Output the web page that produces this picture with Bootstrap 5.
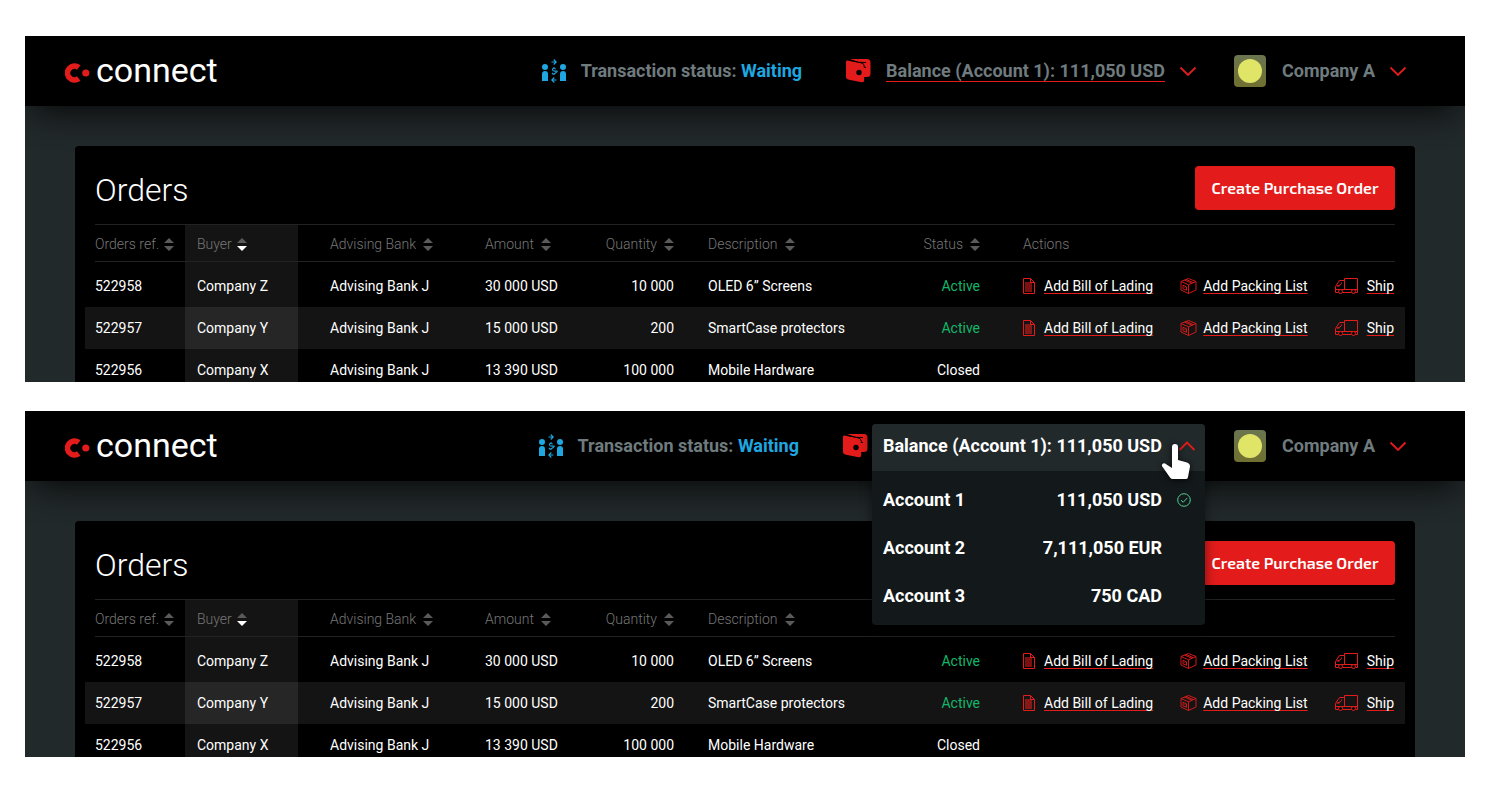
<!DOCTYPE html>
<html lang="en">
<head>
<meta charset="utf-8">
<meta name="viewport" content="width=device-width, initial-scale=1">
<title>Connect – Orders</title>
<link href="https://cdn.jsdelivr.net/npm/bootstrap@5.3.0/dist/css/bootstrap.min.css" rel="stylesheet">
<style>
  body { font-family: Roboto, "Liberation Sans", sans-serif; font-size: 14px; line-height: 20px; background: #fff; color: #fff; }
  .boards { padding: 36px 47px 31px 25px; gap: 29px; }
  .board { background: #22292b; overflow: hidden; }
  .topbar { background: #000; height: 70px; padding: 0 58px 0 40px; box-shadow: 0 14px 32px -8px rgba(0,0,0,.8); font-size: 18px; line-height: 24px; font-weight: 700; color: #6f7b7e; position: relative; z-index: 2; }
  .brand { font-size: 34px; line-height: 40px; font-weight: 400; color: #fff; gap: 6px; padding-bottom: 2px; }
  .brand:hover { color: #fff; }
  .brand svg { margin-top: 6px; }
  .status-icon { margin-right: 14px; }
  .waiting { color: #1ea7e1; }
  .wallet { margin-left: 44px; }
  .plain-btn { background: none; border: 0; padding: 0; color: inherit; font: inherit; display: flex; align-items: center; }
  .balance { margin-left: 15px; gap: 14px; }
  .balance-text { border-bottom: 1px solid #e31c1b; line-height: 20px; }
  .company { margin-left: 37px; gap: 14px; }
  .avatar { width: 32px; height: 32px; border-radius: 4px; background: linear-gradient(#6a7550, #707030); margin-right: 2px; }
  .avatar::before { content: ""; width: 24px; height: 24px; border-radius: 50%; background: #e1e567; }

  .picker { margin-left: 4px; width: 333px; height: 46px; }
  .picker-box { position: absolute; top: 1px; left: 0; right: 0; background: #13181a; border-radius: 4px; box-shadow: 0 4px 12px rgba(0,0,0,.5); color: #fff; }
  .picker-head { width: 100%; height: 47px; padding: 0 9px 3px 11px; justify-content: space-between; background: #22292b; border-radius: 4px 4px 0 0; }
  .picker + .company { margin-left: 29px; }
  .accounts { padding: 5px 0; margin: 0; list-style: none; }
  .account { width: 100%; height: 48px; padding: 0 14px 0 11px; gap: 15px; }
  .account .tick { width: 14px; }
  .pointer { position: absolute; left: 290px; top: 20px; pointer-events: none; filter: drop-shadow(0 1px 3px rgba(0,0,0,.8)); }

  .page { padding: 40px 50px 0; }
  .orders { background: #000; border-radius: 4px 4px 0 0; padding: 20px 20px 0; }
  .orders-title { font-size: 32px; line-height: 48px; font-weight: 300; margin: 0; }
  .create { background: #e31c1b; color: #fff; border: 0; border-radius: 4px; width: 200px; height: 44px; padding: 0 0 1px; font-family: "Exo 2", Roboto, sans-serif; font-size: 16px; font-weight: 600; }
  .create:hover { background: #c81615; color: #fff; }
  .grid { width: 100%; table-layout: fixed; border-collapse: separate; border-spacing: 0; margin-top: 10px; white-space: nowrap; }
  .grid th { font-weight: 300; color: #777; border: solid #222; border-width: 1px 0; height: 38px; padding: 2px 0 0; }
  .grid td { padding: 11px 0; }
  .grid tr.first td { padding-top: 14px; }
  .grid tr.last td { padding-bottom: 2px; }
  .grid .buyer { padding-left: 12px; background: #141414; }
  .grid .bank { padding-left: 32px; }
  .grid .desc { padding-left: 34px; }
  .grid th.acts { padding-left: 43px; }
  .grid td.acts { padding-left: 42px; padding-right: 1px; }
  .grid tr.lit td { background: #141414; }
  .grid tr.lit td.buyer { background: #262626; }
  .grid tr.lit td:first-child { box-shadow: -10px 0 #141414; }
  .grid tr.lit td:last-child { box-shadow: 10px 0 #141414; }
  .c-ref { width: 90px; } .c-buyer { width: 113px; } .c-bank { width: 187px; } .c-amount { width: 95px; }
  .c-qty { width: 94px; } .c-desc { width: 206px; } .c-status { width: 100px; } .c-acts { width: 415px; }
  .sorter { gap: 7px; display: inline-flex; color: #5a5a5a; }
  .sorter.tight { gap: 5px; }
  .sorter span { color: #777; }
  .active-text { color: #12b76a; }
  .act { color: #fff; text-decoration: none; gap: 8px; }
  .act:hover { color: #fff; }
  .act.pack { gap: 6px; }
  .act span { text-decoration: underline #e31c1b 1px; text-underline-offset: 2px; text-decoration-skip-ink: none; }
</style>
</head>
<body>
<svg width="0" height="0" class="position-absolute" aria-hidden="true">
  <symbol id="i-logo" viewBox="0 0 25 20"><path d="M15.500 2.200A9.800 9.800 0 1 0 15.500 17.800L12 13.200A4.100 4.100 0 1 1 12 6.800Z" fill="#e31c1b"/><circle cx="20.800" cy="10" r="3.600" fill="#e31c1b"/></symbol>
  <symbol id="i-people" viewBox="0 0 26 26"><g fill="#1ea7e1"><circle cx="4" cy="9" r="3"/><path d="M1 23v-7q0-3 3-3t3 3v7z"/><circle cx="22" cy="9" r="3"/><path d="M19 23v-7q0-3 3-3t3 3v7z"/></g><g fill="none" stroke="#1ea7e1" stroke-width="1.100"><path d="M10.500 4h4.500M12.700 1.500L15.200 4l-2.500 2.500M15.500 22H11M13.300 19.500L10.800 22l2.500 2.500M14.700 11q-3.200-1.200-3.200.600t3.200 1.500-.200 1.900-3.200-.3M13 9v1M13 15.500v1.500"/></g></symbol>
  <symbol id="i-wallet" viewBox="0 0 25 24"><path d="M4 0h17q3.500 0 3.500 3.500v11q0 3.500-3.500 3.500h-3V7q0-2.500-3-3.200z" fill="#e31c1b"/><path d="M0 3Q0 1.300 2 1.600L15.500 4.200q2.700.6 2.700 3.300v13.500q0 2.700-2.500 2.200L3 20.700q-3-.6-3-3z" fill="#e31c1b"/><path d="M2.500 1.200L15 3.700q3 .6 3.300 3.300v2M14 3.300l6 .2M18.500 8.500h1.500" stroke="#000" stroke-width=".9" fill="none"/><circle cx="13" cy="13.500" r="2.700"/></symbol>
  <symbol id="i-down" viewBox="0 0 18 12"><path d="M1.500 2.500L9 10 16.500 2.500" fill="none" stroke="#e31c1b" stroke-width="1.800"/></symbol>
  <symbol id="i-up" viewBox="0 0 18 12"><path d="M1.500 10L9 2.500 16.500 10" fill="none" stroke="#e31c1b" stroke-width="1.800"/></symbol>
  <symbol id="i-sort" viewBox="0 0 10 13"><path d="M0 5L5 0l5 5zM0 8l5 5 5-5z" fill="currentColor"/></symbol>
  <symbol id="i-sort-desc" viewBox="0 0 10 13"><path d="M0 5L5 0l5 5z" fill="currentColor"/><path d="M0 8l5 5 5-5z" fill="#fff"/></symbol>
  <symbol id="i-doc" viewBox="0 0 14 16"><path d="M3 4h7v10H3z" fill="#e31c1b" opacity=".55"/><path d="M1.500.500h7l4 4v11h-11zM8.500.500v4h4" fill="none" stroke="#e31c1b"/></symbol>
  <symbol id="i-box" viewBox="0 0 17 16"><path d="M8.500.500l7.500 3v8.500l-7.500 3.500L1 12V3.500zM1 3.500l7.500 3.300L16 3.500M8.500 6.800v8.700M4.500 2l7.500 3.300M6 1.400l7.500 3.300M3 7.300l3.500 1.500v3.500L3 10.800zM4.500 9.500l1 .5" fill="none" stroke="#e31c1b" stroke-width=".9"/></symbol>
  <symbol id="i-truck" viewBox="0 0 24 16"><g fill="none" stroke="#e31c1b"><path d="M3.500 14.500h-3v-6L4.500 2.500h5V.500h13v14h-2M9.500 2.500v9M7.500 14.500h9M.500 11.500h22M2.500 8l2.500-1 1.500-1.500V4.500M4.500 8h-3"/></g><g fill="#000" stroke="#e31c1b"><circle cx="5.500" cy="13.500" r="2"/><circle cx="18.500" cy="13.500" r="2"/></g></symbol>
  <symbol id="i-tick" viewBox="0 0 14 14"><g fill="none" stroke="#4fcf93"><circle cx="7" cy="7" r="6.300"/><path d="M4 7.200l2.200 2.100L10.200 5"/></g></symbol>
  <symbol id="i-hand" viewBox="0 0 28 36"><path d="M10 3q0-3 3-3t3 3v13l9 2.500q3 1 3 4l-2 10.500q0 2-2 2H11q-2 0-3-1.500L1 23.500q-2-2-.5-3.500 1.500-1.500 4 .5L10 24z" fill="#fff"/></symbol>
</svg>

<main class="boards d-flex flex-column">
  <section class="board" aria-label="Balance menu closed">
    <header class="topbar d-flex align-items-center">
      <a href="#" class="brand d-flex align-items-center text-decoration-none me-auto"><svg width="25" height="20"><use href="#i-logo"/></svg>connect</a>
      <svg class="status-icon" width="26" height="26"><use href="#i-people"/></svg>
      <span>Transaction status: <span class="waiting">Waiting</span></span>
      <svg class="wallet" width="25" height="24"><use href="#i-wallet"/></svg>
      <button type="button" class="plain-btn balance" aria-expanded="false"><span class="balance-text">Balance (Account 1): 111,050 USD</span><svg width="18" height="12"><use href="#i-down"/></svg></button>
      <button type="button" class="plain-btn company"><span class="avatar d-flex align-items-center justify-content-center"></span>Company A<svg width="18" height="12"><use href="#i-down"/></svg></button>
    </header>
    <div class="page"><div class="orders">
      <div class="d-flex justify-content-between align-items-start"><h1 class="orders-title">Orders</h1><button type="button" class="btn create">Create Purchase Order</button></div>
      <table class="grid">
        <colgroup><col class="c-ref"><col class="c-buyer"><col class="c-bank"><col class="c-amount"><col class="c-qty"><col class="c-desc"><col class="c-status"><col class="c-acts"></colgroup>
        <thead><tr>
          <th><button type="button" class="plain-btn sorter tight"><span>Orders ref.</span><svg width="10" height="13"><use href="#i-sort"/></svg></button></th>
          <th class="buyer"><button type="button" class="plain-btn sorter tight"><span>Buyer</span><svg width="10" height="13"><use href="#i-sort-desc"/></svg></button></th>
          <th class="bank"><button type="button" class="plain-btn sorter"><span>Advising Bank</span><svg width="10" height="13"><use href="#i-sort"/></svg></button></th>
          <th><button type="button" class="plain-btn sorter"><span>Amount</span><svg width="10" height="13"><use href="#i-sort"/></svg></button></th>
          <th class="text-end"><button type="button" class="plain-btn sorter"><span>Quantity</span><svg width="10" height="13"><use href="#i-sort"/></svg></button></th>
          <th class="desc"><button type="button" class="plain-btn sorter"><span>Description</span><svg width="10" height="13"><use href="#i-sort"/></svg></button></th>
          <th class="text-end"><button type="button" class="plain-btn sorter"><span>Status</span><svg width="10" height="13"><use href="#i-sort"/></svg></button></th>
          <th class="acts">Actions</th>
        </tr></thead>
        <tbody>
          <tr class="first"><td>522958</td><td class="buyer">Company Z</td><td class="bank">Advising Bank J</td><td>30 000 USD</td><td class="text-end">10 000</td><td class="desc">OLED 6” Screens</td><td class="text-end active-text">Active</td>
            <td class="acts"><div class="d-flex justify-content-between"><a href="#" class="act d-flex align-items-center"><svg width="14" height="16"><use href="#i-doc"/></svg><span>Add Bill of Lading</span></a><a href="#" class="act pack d-flex align-items-center"><svg width="17" height="16"><use href="#i-box"/></svg><span>Add Packing List</span></a><a href="#" class="act d-flex align-items-center"><svg width="24" height="16"><use href="#i-truck"/></svg><span>Ship</span></a></div></td></tr>
          <tr class="lit"><td>522957</td><td class="buyer">Company Y</td><td class="bank">Advising Bank J</td><td>15 000 USD</td><td class="text-end">200</td><td class="desc">SmartCase protectors</td><td class="text-end active-text">Active</td>
            <td class="acts"><div class="d-flex justify-content-between"><a href="#" class="act d-flex align-items-center"><svg width="14" height="16"><use href="#i-doc"/></svg><span>Add Bill of Lading</span></a><a href="#" class="act pack d-flex align-items-center"><svg width="17" height="16"><use href="#i-box"/></svg><span>Add Packing List</span></a><a href="#" class="act d-flex align-items-center"><svg width="24" height="16"><use href="#i-truck"/></svg><span>Ship</span></a></div></td></tr>
          <tr class="last"><td>522956</td><td class="buyer">Company X</td><td class="bank">Advising Bank J</td><td>13 390 USD</td><td class="text-end">100 000</td><td class="desc">Mobile Hardware</td><td class="text-end">Closed</td><td class="acts"></td></tr>
        </tbody>
      </table>
    </div></div>
  </section>

  <section class="board" aria-label="Balance menu open">
    <header class="topbar d-flex align-items-center">
      <a href="#" class="brand d-flex align-items-center text-decoration-none me-auto"><svg width="25" height="20"><use href="#i-logo"/></svg>connect</a>
      <svg class="status-icon" width="26" height="26"><use href="#i-people"/></svg>
      <span>Transaction status: <span class="waiting">Waiting</span></span>
      <svg class="wallet" width="25" height="24"><use href="#i-wallet"/></svg>
      <div class="picker position-relative">
        <div class="picker-box">
          <button type="button" class="plain-btn picker-head" aria-expanded="true"><span>Balance (Account 1): 111,050 USD</span><svg width="18" height="12"><use href="#i-up"/></svg></button>
          <ul class="accounts">
            <li><button type="button" class="plain-btn account"><span class="me-auto">Account 1</span><span>111,050 USD</span><svg class="tick" width="14" height="14"><use href="#i-tick"/></svg></button></li>
            <li><button type="button" class="plain-btn account"><span class="me-auto">Account 2</span><span>7,111,050 EUR</span><span class="tick"></span></button></li>
            <li><button type="button" class="plain-btn account"><span class="me-auto">Account 3</span><span>750 CAD</span><span class="tick"></span></button></li>
          </ul>
          <svg class="pointer" width="28" height="36"><use href="#i-hand"/></svg>
        </div>
      </div>
      <button type="button" class="plain-btn company"><span class="avatar d-flex align-items-center justify-content-center"></span>Company A<svg width="18" height="12"><use href="#i-down"/></svg></button>
    </header>
    <div class="page"><div class="orders">
      <div class="d-flex justify-content-between align-items-start"><h2 class="orders-title">Orders</h2><button type="button" class="btn create">Create Purchase Order</button></div>
      <table class="grid">
        <colgroup><col class="c-ref"><col class="c-buyer"><col class="c-bank"><col class="c-amount"><col class="c-qty"><col class="c-desc"><col class="c-status"><col class="c-acts"></colgroup>
        <thead><tr>
          <th><button type="button" class="plain-btn sorter tight"><span>Orders ref.</span><svg width="10" height="13"><use href="#i-sort"/></svg></button></th>
          <th class="buyer"><button type="button" class="plain-btn sorter tight"><span>Buyer</span><svg width="10" height="13"><use href="#i-sort-desc"/></svg></button></th>
          <th class="bank"><button type="button" class="plain-btn sorter"><span>Advising Bank</span><svg width="10" height="13"><use href="#i-sort"/></svg></button></th>
          <th><button type="button" class="plain-btn sorter"><span>Amount</span><svg width="10" height="13"><use href="#i-sort"/></svg></button></th>
          <th class="text-end"><button type="button" class="plain-btn sorter"><span>Quantity</span><svg width="10" height="13"><use href="#i-sort"/></svg></button></th>
          <th class="desc"><button type="button" class="plain-btn sorter"><span>Description</span><svg width="10" height="13"><use href="#i-sort"/></svg></button></th>
          <th aria-label="Status"></th>
          <th aria-label="Actions"></th>
        </tr></thead>
        <tbody>
          <tr class="first"><td>522958</td><td class="buyer">Company Z</td><td class="bank">Advising Bank J</td><td>30 000 USD</td><td class="text-end">10 000</td><td class="desc">OLED 6” Screens</td><td class="text-end active-text">Active</td>
            <td class="acts"><div class="d-flex justify-content-between"><a href="#" class="act d-flex align-items-center"><svg width="14" height="16"><use href="#i-doc"/></svg><span>Add Bill of Lading</span></a><a href="#" class="act pack d-flex align-items-center"><svg width="17" height="16"><use href="#i-box"/></svg><span>Add Packing List</span></a><a href="#" class="act d-flex align-items-center"><svg width="24" height="16"><use href="#i-truck"/></svg><span>Ship</span></a></div></td></tr>
          <tr class="lit"><td>522957</td><td class="buyer">Company Y</td><td class="bank">Advising Bank J</td><td>15 000 USD</td><td class="text-end">200</td><td class="desc">SmartCase protectors</td><td class="text-end active-text">Active</td>
            <td class="acts"><div class="d-flex justify-content-between"><a href="#" class="act d-flex align-items-center"><svg width="14" height="16"><use href="#i-doc"/></svg><span>Add Bill of Lading</span></a><a href="#" class="act pack d-flex align-items-center"><svg width="17" height="16"><use href="#i-box"/></svg><span>Add Packing List</span></a><a href="#" class="act d-flex align-items-center"><svg width="24" height="16"><use href="#i-truck"/></svg><span>Ship</span></a></div></td></tr>
          <tr class="last"><td>522956</td><td class="buyer">Company X</td><td class="bank">Advising Bank J</td><td>13 390 USD</td><td class="text-end">100 000</td><td class="desc">Mobile Hardware</td><td class="text-end">Closed</td><td class="acts"></td></tr>
        </tbody>
      </table>
    </div></div>
  </section>
</main>
<script src="https://cdn.jsdelivr.net/npm/bootstrap@5.3.0/dist/js/bootstrap.bundle.min.js"></script>
</body>
</html>
